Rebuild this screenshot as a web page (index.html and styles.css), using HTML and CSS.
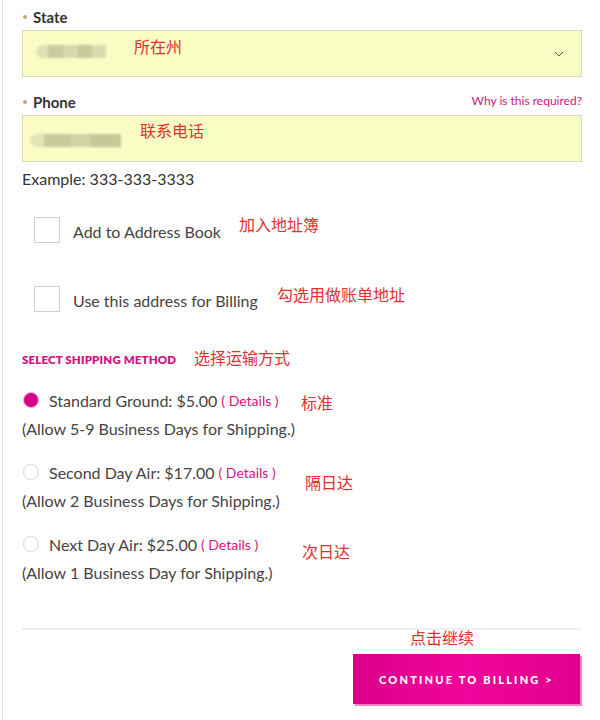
FILE: index.html
```html
<!DOCTYPE html>
<html lang="en">
<head>
    <meta charset="UTF-8">
    <meta name="viewport" content="width=device-width, initial-scale=1.0">
    <title>Shipping</title>
    <link rel="stylesheet" href="styles.css">
</head>
<body>
    <div class="page">
        <div class="field">
            <div class="field-head">
                <label class="field-label"><span class="dot"></span>State</label>
            </div>
            <div class="input select">
                <span class="blur blur-state"></span>
                <span class="note note-state">所在州</span>
                <svg class="chevron" width="10" height="6" viewBox="0 0 10 6"><path d="M1 1l4 4 4-4" fill="none" stroke="#555" stroke-width="1"/></svg>
            </div>
        </div>

        <div class="field field-phone">
            <div class="field-head">
                <label class="field-label"><span class="dot"></span>Phone</label>
                <a href="#" class="why">Why is this required?</a>
            </div>
            <div class="input">
                <span class="blur blur-phone"></span>
                <span class="note note-phone">联系电话</span>
            </div>
            <div class="hint">Example: 333-333-3333</div>
        </div>

        <div class="check-row check-first">
            <span class="checkbox"></span>
            <span class="check-text">Add to Address Book</span>
            <span class="note note-book">加入地址簿</span>
        </div>
        <div class="check-row">
            <span class="checkbox"></span>
            <span class="check-text">Use this address for Billing</span>
            <span class="note note-billing">勾选用做账单地址</span>
        </div>

        <div class="section-title">
            SELECT SHIPPING METHOD
            <span class="note note-method">选择运输方式</span>
        </div>

        <div class="ship">
            <div class="ship-line">
                <span class="radio checked"></span>
                <span class="ship-name">Standard Ground: $5.00</span>
                <a href="#" class="details">( Details )</a>
                <span class="note note-std">标准</span>
            </div>
            <div class="ship-days">(Allow 5-9 Business Days for Shipping.)</div>
        </div>
        <div class="ship">
            <div class="ship-line">
                <span class="radio"></span>
                <span class="ship-name">Second Day Air: $17.00</span>
                <a href="#" class="details">( Details )</a>
                <span class="note note-second">隔日达</span>
            </div>
            <div class="ship-days">(Allow 2 Business Days for Shipping.)</div>
        </div>
        <div class="ship">
            <div class="ship-line">
                <span class="radio"></span>
                <span class="ship-name">Next Day Air: $25.00</span>
                <a href="#" class="details">( Details )</a>
                <span class="note note-next">次日达</span>
            </div>
            <div class="ship-days">(Allow 1 Business Day for Shipping.)</div>
        </div>

        <div class="actions">
            <span class="note note-continue">点击继续</span>
            <button class="continue">CONTINUE TO BILLING &gt;</button>
        </div>
    </div>
</body>
</html>
```

FILE: styles.css
```css
body {
    margin: 0;
    font-family: Lato, "Open Sans", sans-serif;
    color: #3a3a3a;
    background: white;
}
.page {
    margin-left: 2px;
    border-left: 1px solid #e2e2e2;
    padding: 8px 18px 0 19px;
    width: 560px;
    min-height: 712px;
}
.field-head {
    display: flex;
    justify-content: space-between;
    align-items: flex-end;
    height: 18px;
    margin-bottom: 4px;
}
.field-label {
    font-size: 15px;
    font-weight: 700;
    color: #333;
    display: flex;
    align-items: center;
}
.dot {
    width: 4px;
    height: 4px;
    border-radius: 50%;
    background: #c9a57a;
    margin: 0 6px 0 1px;
}
.why {
    font-size: 12px;
    color: #c8187c;
    text-decoration: none;
    margin-bottom: 3px;
}
.input {
    position: relative;
    height: 45px;
    background: #f9fcc3;
    border: 1px solid #d9dab9;
}
.field-phone {
    margin-top: 16px;
}
.blur {
    position: absolute;
    height: 13px;
    border-radius: 7px 0 0 7px;
    filter: blur(0.8px);
}
.blur-state {
    left: 13px;
    top: 14px;
    width: 70px;
    background: linear-gradient(90deg, #dfe2b3 0 12px, #c9cc9e 12px 27px, #d6d9ac 27px 42px, #c6ca9a 42px 56px, #dadcae 56px);
}
.blur-phone {
    left: 7px;
    top: 18px;
    width: 91px;
    background: linear-gradient(90deg, #e2e5b6 0 14px, #c7cb9c 14px 40px, #d0d3a5 40px 60px, #c5c998 60px);
}
.chevron {
    position: absolute;
    right: 17px;
    top: 20px;
}
.note {
    position: absolute;
    font-family: "Noto Sans CJK SC", sans-serif;
    font-size: 16px;
    color: #e03030;
    line-height: 18px;
    font-weight: 400;
    letter-spacing: 0;
    white-space: nowrap;
}
.note-state { left: 111px; top: 6px; }
.note-phone { left: 117px; top: 5px; }
.hint {
    font-size: 16px;
    color: #333;
    margin-top: 8px;
    line-height: 18px;
}
.check-row {
    position: relative;
    display: flex;
    align-items: center;
    margin-left: 12px;
    margin-top: 43px;
    height: 26px;
}
.check-first {
    margin-top: 29px;
}
.checkbox {
    width: 24px;
    height: 24px;
    border: 1px solid #cfcfcf;
    background: white;
}
.check-text {
    font-size: 16px;
    color: #444;
    margin-left: 13px;
    padding-top: 3px;
}
.note-book { left: 205px; top: -2px; }
.note-billing { left: 243px; top: -1px; }
.section-title {
    position: relative;
    margin-top: 41px;
    font-size: 11.5px;
    font-weight: 800;
    letter-spacing: 0.15px;
    color: #d0137f;
    line-height: 14px;
}
.note-method { left: 172px; top: -5px; }
.ship {
    margin-top: 23px;
}
.ship + .ship {
    margin-top: 24px;
}
.ship-line {
    position: relative;
    display: flex;
    align-items: center;
    height: 20px;
}
.radio {
    width: 16px;
    height: 16px;
    border-radius: 50%;
    border: 1px solid #d6d6d6;
    background: white;
    margin: 0 10px 0 1px;
    box-sizing: border-box;
}
.radio.checked {
    background: #d5008a;
    border: 1px solid #f1b7dc;
}
.ship-name {
    font-size: 16px;
    color: #444;
}
.details {
    font-size: 14px;
    color: #d0137f;
    text-decoration: none;
    margin-left: 4px;
}
.note-std { left: 279px; top: 3px; }
.note-second { left: 283px; top: 11px; }
.note-next { left: 280px; top: 8px; }
.ship-days {
    font-size: 16px;
    color: #444;
    margin-top: 10px;
    line-height: 18px;
}
.actions {
    position: relative;
    margin-top: 46px;
    border-top: 2px solid #f0f0f0;
    padding-top: 24px;
    display: flex;
    justify-content: flex-end;
}
.note-continue { left: 388px; top: -2px; }
.continue {
    width: 227px;
    height: 50px;
    border: none;
    background: linear-gradient(90deg, #dc0089, #f0049b 50%, #e2008e);
    box-shadow: 2px 2px 0 #ff7ec4;
    color: white;
    font-family: Lato, sans-serif;
    font-size: 11px;
    font-weight: 900;
    letter-spacing: 2.2px;
    cursor: pointer;
    margin-right: 2px;
}
```
